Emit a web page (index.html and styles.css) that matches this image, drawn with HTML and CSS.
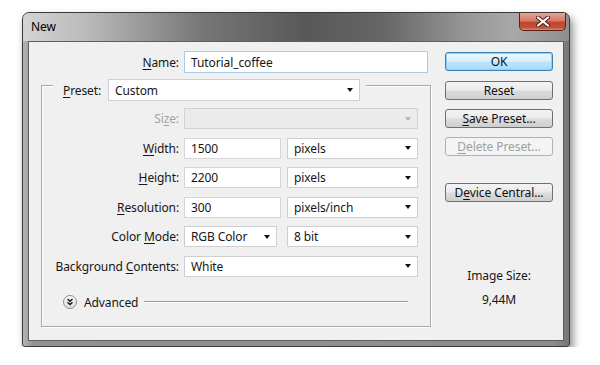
FILE: index.html
```html
<!DOCTYPE html>
<html lang="en">
<head>
    <meta charset="UTF-8">
    <title>New</title>
    <link rel="stylesheet" href="styles.css">
</head>
<body>
    <div class="window">
        <div class="titlebar">
            <span class="title">New</span>
            <span class="close">
                <svg width="14" height="11" viewBox="0 0 14 11">
                    <path d="M2 1.5 L12 9.5 M12 1.5 L2 9.5" stroke="#4a2018" stroke-width="4" stroke-linecap="round"/>
                    <path d="M2 1.5 L12 9.5 M12 1.5 L2 9.5" stroke="#fff" stroke-width="2.2" stroke-linecap="round"/>
                </svg>
            </span>
        </div>
        <div class="client">
            <div class="main">
                <div class="row name-row">
                    <span class="label"><u>N</u>ame:</span>
                    <div class="field text name">Tutorial_coffee</div>
                </div>
                <div class="group">
                    <div class="preset">
                        <span class="label"><u>P</u>reset:</span>
                        <div class="field select preset-box">Custom<span class="caret"></span></div>
                    </div>
                    <div class="row disabled">
                        <span class="label">Si<u>z</u>e:</span>
                        <div class="field select full off"><span class="caret"></span></div>
                    </div>
                    <div class="row">
                        <span class="label"><u>W</u>idth:</span>
                        <div class="pair">
                            <div class="field text num">1500</div>
                            <div class="field select unit">pixels<span class="caret"></span></div>
                        </div>
                    </div>
                    <div class="row">
                        <span class="label"><u>H</u>eight:</span>
                        <div class="pair">
                            <div class="field text num">2200</div>
                            <div class="field select unit">pixels<span class="caret"></span></div>
                        </div>
                    </div>
                    <div class="row">
                        <span class="label"><u>R</u>esolution:</span>
                        <div class="pair">
                            <div class="field text num">300</div>
                            <div class="field select unit">pixels/inch<span class="caret"></span></div>
                        </div>
                    </div>
                    <div class="row">
                        <span class="label">Color <u>M</u>ode:</span>
                        <div class="pair wide-gap">
                            <div class="field select mode">RGB Color<span class="caret"></span></div>
                            <div class="field select unit">8 bit<span class="caret"></span></div>
                        </div>
                    </div>
                    <div class="row">
                        <span class="label">Background <u>C</u>ontents:</span>
                        <div class="field select full">White<span class="caret"></span></div>
                    </div>
                    <div class="advanced">
                        <span class="adv-icon">
                            <svg width="14" height="14" viewBox="0 0 14 14">
                                <defs>
                                    <linearGradient id="advFill" x1="0" y1="0" x2="0" y2="1">
                                        <stop offset="0" stop-color="#ffffff"/>
                                        <stop offset="1" stop-color="#d8d8d8"/>
                                    </linearGradient>
                                </defs>
                                <circle cx="7" cy="7" r="6.5" fill="url(#advFill)" stroke="#8e8e8e"/>
                                <path d="M4.5 4 L7 6.3 L9.5 4 M4.5 7.2 L7 9.5 L9.5 7.2" fill="none" stroke="#1a1a1a" stroke-width="1.4"/>
                            </svg>
                        </span>
                        <span class="adv-text">Advanced</span>
                        <span class="adv-line"></span>
                    </div>
                </div>
            </div>
            <div class="side">
                <div class="btn default">OK</div>
                <div class="btn reset">Reset</div>
                <div class="btn save"><u>S</u>ave Preset...</div>
                <div class="btn save off"><u>D</u>elete Preset...</div>
                <div class="btn device">D<u>e</u>vice Central...</div>
                <div class="info">Image Size:</div>
                <div class="info size">9,44M</div>
            </div>
        </div>
    </div>
</body>
</html>
```

FILE: styles.css
```css
body {
    margin: 0;
    background: #fff;
    font-family: "Noto Sans", sans-serif;
    font-size: 12px;
    letter-spacing: -0.1px;
    color: #161616;
}

u {
    text-decoration-thickness: 1px;
    text-underline-offset: 2px;
}

.window {
    margin: 12px 0 0 22px;
    width: 548px;
    height: 335px;
    box-sizing: border-box;
    border: 1px solid #3a3a3a;
    border-radius: 7px 7px 3px 3px;
    background: linear-gradient(90deg, #b4b4b4 0%, #929292 2%, #8c8c8c 97%, #777 100%);
    box-shadow: 3px 5px 9px rgba(0, 0, 0, 0.45);
    display: flex;
    flex-direction: column;
}

.titlebar {
    height: 28px;
    display: flex;
    align-items: flex-start;
    border-radius: 6px 6px 0 0;
    background: linear-gradient(90deg, #d4d4d4 0%, #b9b9b9 12%, #767676 33%, #585858 52%, #666 66%, #999 82%, #a8a8a8 90%, #8e8e8e 100%);
}

.title {
    padding: 6px 0 0 8px;
    line-height: 16px;
    color: #000;
}

.close {
    margin-left: auto;
    margin-right: 3px;
    width: 47px;
    height: 18px;
    box-sizing: border-box;
    border: 1px solid #5b2117;
    border-top: none;
    border-radius: 0 0 5px 5px;
    background: linear-gradient(180deg, #e6a393 0%, #d67966 45%, #c2452f 55%, #c0503a 85%, #dc8a72 100%);
    display: flex;
    align-items: center;
    justify-content: center;
}

.client {
    flex: 1;
    margin: 0 5px 5px;
    border: 1px solid #5e5e5e;
    background: #f0f0f0;
    display: flex;
}

.main {
    width: 416px;
    padding-top: 9px;
}

.row {
    display: grid;
    grid-template-columns: 137px auto;
    column-gap: 5px;
    height: 21px;
    align-items: center;
}

.label {
    text-align: right;
    white-space: nowrap;
}

.name-row {
    margin-left: 13px;
    height: 22px;
}

.field {
    box-sizing: border-box;
    height: 21px;
    background: #fff;
    border: 1px solid #d6d6d6;
    padding-left: 6px;
    display: flex;
    align-items: center;
    white-space: nowrap;
}

.name {
    width: 244px;
    height: 22px;
    border-color: #a9cce6;
}

.select {
    padding-right: 6px;
    border-color: #cfcfcf;
}

.caret {
    margin-left: auto;
    width: 0;
    height: 0;
    border-left: 3.5px solid transparent;
    border-right: 3.5px solid transparent;
    border-top: 4px solid #111;
}

.group {
    margin: 12px 0 0 12px;
    width: 390px;
    height: 242px;
    box-sizing: border-box;
    border: 1px solid #a8a8a8;
    box-shadow: 1px 1px 0 #fff, inset 1px 1px 0 #fff;
    display: flex;
    flex-direction: column;
    gap: 8.5px;
}

.preset {
    margin: -7px 0 -1.5px 11px;
    padding: 0 6px 0 10px;
    height: 22px;
    width: max-content;
    background: #f0f0f0;
    display: flex;
    align-items: center;
    gap: 5px;
}

.preset .label {
    width: 40px;
    text-align: left;
}

.preset-box {
    width: 252px;
    height: 22px;
}

.full {
    width: 234px;
}

.off {
    background: #ebebeb;
    border-color: #d2d2d2;
}

.off .caret {
    border-top-color: #b5b5b5;
}

.disabled .label {
    color: #a3a3a3;
}

.pair {
    display: flex;
    gap: 6px;
}

.wide-gap {
    gap: 10px;
}

.num {
    width: 97px;
}

.unit {
    width: 131px;
}

.mode {
    width: 93px;
}

.advanced {
    margin-top: 9px;
    padding-left: 21px;
    margin-right: 22px;
    height: 16px;
    display: flex;
    align-items: center;
}

.adv-icon {
    display: flex;
    margin-right: 7px;
}

.adv-text {
    margin-right: 6px;
}

.adv-line {
    flex: 1;
    border-top: 1px solid #9a9a9a;
    border-bottom: 1px solid #fff;
}

.side {
    width: 108px;
    padding-top: 10px;
    display: flex;
    flex-direction: column;
}

.btn {
    height: 19px;
    box-sizing: border-box;
    border: 1px solid #707070;
    border-radius: 3px;
    background: linear-gradient(180deg, #f3f3f3 0%, #ebebeb 48%, #dcdcdc 52%, #cfcfcf 100%);
    display: flex;
    align-items: center;
    justify-content: center;
    color: #111;
}

.default {
    border-color: #3c7fb1;
    background: linear-gradient(180deg, #eaf6fd 0%, #d9f0fc 48%, #bee6fd 52%, #a7d9f5 100%);
    box-shadow: inset 0 0 0 1px #8fd0f5;
}

.reset {
    margin-top: 10px;
}

.save {
    margin-top: 9px;
}

.btn.off {
    color: #a0a0a0;
    border-color: #adb2b5;
    background: #f4f4f4;
}

.device {
    margin-top: 27px;
}

.info {
    margin-top: 66px;
    line-height: 16px;
    text-align: center;
}

.info.size {
    margin-top: 8px;
}
```
